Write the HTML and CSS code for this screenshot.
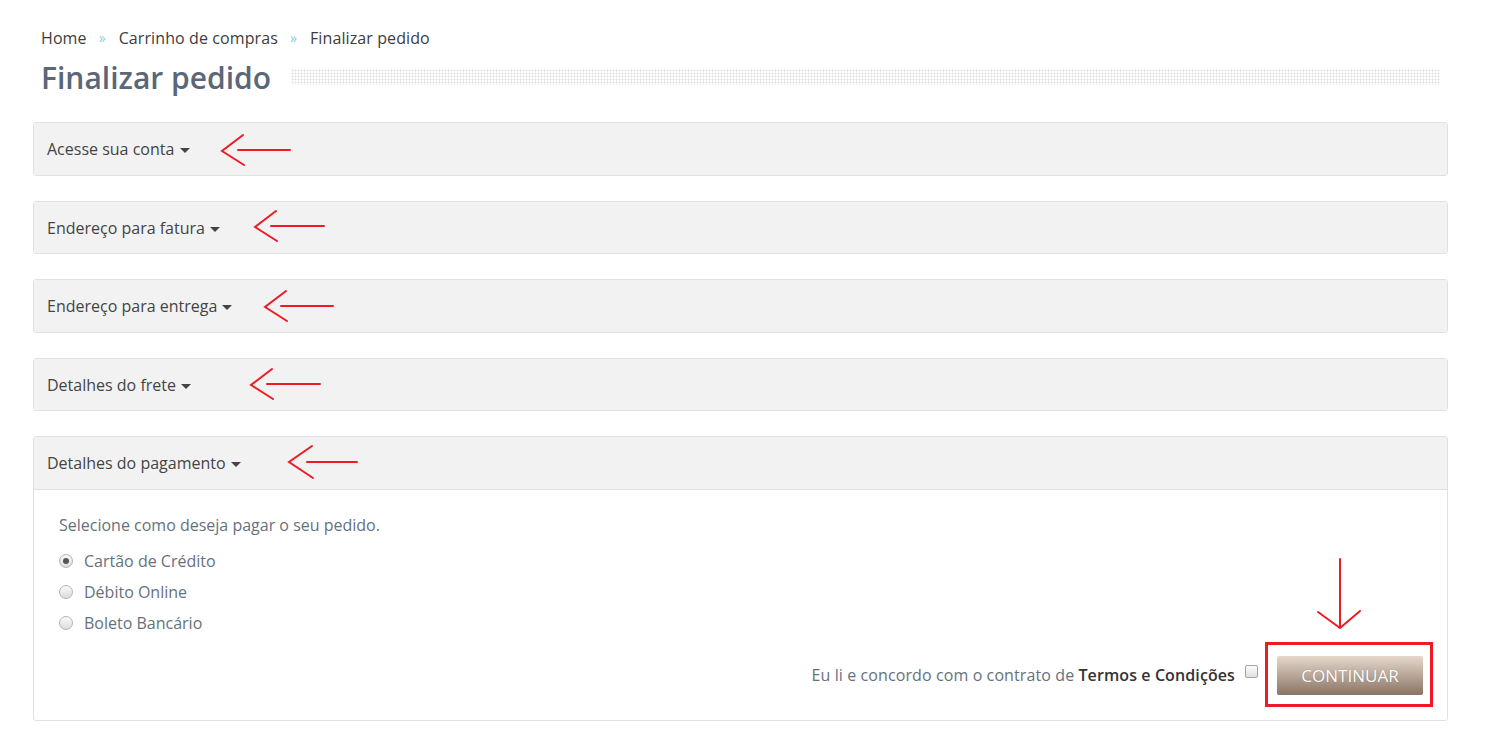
FILE: index.html
```html
<!DOCTYPE html>
<html lang="pt-BR">
<head>
    <meta charset="UTF-8">
    <meta name="viewport" content="width=device-width, initial-scale=1.0">
    <title>Finalizar pedido</title>
    <link rel="stylesheet" href="styles.css">
</head>
<body>
    <div class="page">
        <ul class="breadcrumb">
            <li><a href="#">Home</a></li>
            <li class="sep">»</li>
            <li><a href="#">Carrinho de compras</a></li>
            <li class="sep">»</li>
            <li>Finalizar pedido</li>
        </ul>

        <div class="page-title">
            <h1>Finalizar pedido</h1>
            <span class="title-dots"></span>
        </div>

        <div class="checkout">
            <div class="panel">
                <div class="panel-heading">Acesse sua conta <span class="caret"></span></div>
            </div>
            <div class="panel">
                <div class="panel-heading">Endereço para fatura <span class="caret"></span></div>
            </div>
            <div class="panel">
                <div class="panel-heading">Endereço para entrega <span class="caret"></span></div>
            </div>
            <div class="panel">
                <div class="panel-heading">Detalhes do frete <span class="caret"></span></div>
            </div>
            <div class="panel">
                <div class="panel-heading">Detalhes do pagamento <span class="caret"></span></div>
                <div class="panel-body">
                    <p class="intro">Selecione como deseja pagar o seu pedido.</p>
                    <label class="radio"><input type="radio" name="pagamento" checked> Cartão de Crédito</label>
                    <label class="radio"><input type="radio" name="pagamento"> Débito Online</label>
                    <label class="radio"><input type="radio" name="pagamento"> Boleto Bancário</label>

                    <div class="buttons">
                        <span class="agree">Eu li e concordo com o contrato de <b>Termos e Condições</b></span>
                        <input type="checkbox" class="agree-box">
                        <button type="button" class="btn-continue">CONTINUAR</button>
                    </div>
                </div>
            </div>
        </div>
    </div>

    <!-- marcações em vermelho -->
    <svg class="marks" width="1502" height="743" viewBox="0 0 1502 743">
        <g fill="none" stroke="#ed1c24" stroke-width="2" stroke-linecap="round">
            <path d="M238 150 H290 M243 135 L222 151 L244 165"/>
            <path d="M271 226 H324 M276 211 L255 227 L277 241"/>
            <path d="M281 306 H333 M286 291 L265 307 L287 321"/>
            <path d="M267 384 H320 M272 369 L251 385 L273 399"/>
            <path d="M307 462 H357 M312 446 L289 462 L313 478"/>
            <path d="M1340 559 V626 M1318 612 L1340 628 L1360 611"/>
        </g>
        <rect x="1266.5" y="643.5" width="165" height="62" fill="none" stroke="#ed1c24" stroke-width="3"/>
    </svg>
</body>
</html>
```

FILE: styles.css
```css
* {
    margin: 0;
    padding: 0;
    box-sizing: border-box;
}

body {
    font-family: 'Open Sans', 'Noto Sans', sans-serif;
    background: #fff;
    color: #444;
    font-size: 16px;
    position: relative;
    width: 1502px;
    height: 743px;
    overflow: hidden;
}

.page {
    width: 1415px;
    margin-left: 33px;
    padding-top: 27px;
}

.breadcrumb {
    list-style: none;
    display: flex;
    padding-left: 8px;
    line-height: 22px;
    color: #3d3d3d;
    letter-spacing: 0.1px;
}

.breadcrumb a {
    color: #3d3d3d;
    text-decoration: none;
}

.breadcrumb .sep {
    color: #8ccfd6;
    font-size: 14px;
    margin: 0 13px 0 12px;
}

.page-title {
    display: flex;
    align-items: center;
    margin-top: 9px;
    padding-left: 8px;
    padding-right: 8px;
}

.page-title h1 {
    font-size: 30px;
    font-weight: 600;
    line-height: 40px;
    color: #5b6777;
}

.title-dots {
    flex: 1;
    height: 16px;
    margin-left: 20px;
    margin-top: -2px;
    background-image: radial-gradient(#e0e0e0 0.9px, transparent 1.1px);
    background-size: 3px 3px;
}

.checkout {
    margin-top: 24px;
    display: flex;
    flex-direction: column;
    gap: 25px;
}

.panel {
    border: 1px solid #e1e1e1;
    border-radius: 3px;
    background: #fff;
}

.panel-heading {
    background: #f2f2f2;
    padding: 15px 13px 14.5px;
    line-height: 22px;
    color: #444;
}

.panel-body {
    border-top: 1px solid #e1e1e1;
    padding: 24px 25px 25px 25px;
    color: #66717e;
}

.caret {
    display: inline-block;
    width: 0;
    height: 0;
    margin-left: 1px;
    vertical-align: middle;
    border-top: 5px solid #444;
    border-left: 5px solid transparent;
    border-right: 5px solid transparent;
}

.intro {
    line-height: 22px;
    margin-bottom: 10px;
}

.radio {
    display: flex;
    align-items: center;
    height: 31px;
    line-height: 22px;
    color: #66717e;
}

.radio input {
    appearance: none;
    width: 14px;
    height: 14px;
    margin: 0 11px 0 0;
    border: 1px solid #b4b4b4;
    border-radius: 50%;
    background: linear-gradient(#fafafa, #dcdcdc);
    position: relative;
}

.radio input:checked::after {
    content: '';
    position: absolute;
    left: 3px;
    top: 3px;
    width: 6px;
    height: 6px;
    border-radius: 50%;
    background: #555;
}

.buttons {
    display: flex;
    justify-content: flex-end;
    align-items: center;
    margin-top: 17px;
    margin-right: -1px;
}

.agree {
    color: #66717e;
    letter-spacing: 0.1px;
}

.agree b {
    font-weight: 600;
    color: #333;
}

.agree-box {
    appearance: none;
    width: 13px;
    height: 13px;
    margin: 0 19px 8px 10px;
    border: 1px solid #a5a5a5;
    border-radius: 2px;
    background: linear-gradient(#fdfdfd, #e0e0e0);
}

.btn-continue {
    width: 146px;
    height: 39px;
    border: none;
    border-radius: 2px;
    background: linear-gradient(#e6d9cd, #8a7363);
    color: #fff;
    font-family: 'Open Sans', sans-serif;
    font-size: 17px;
    cursor: pointer;
    text-shadow: 0 0 1px rgba(0, 0, 0, 0.3);
}

.marks {
    position: absolute;
    left: 0;
    top: 0;
    pointer-events: none;
}
```
